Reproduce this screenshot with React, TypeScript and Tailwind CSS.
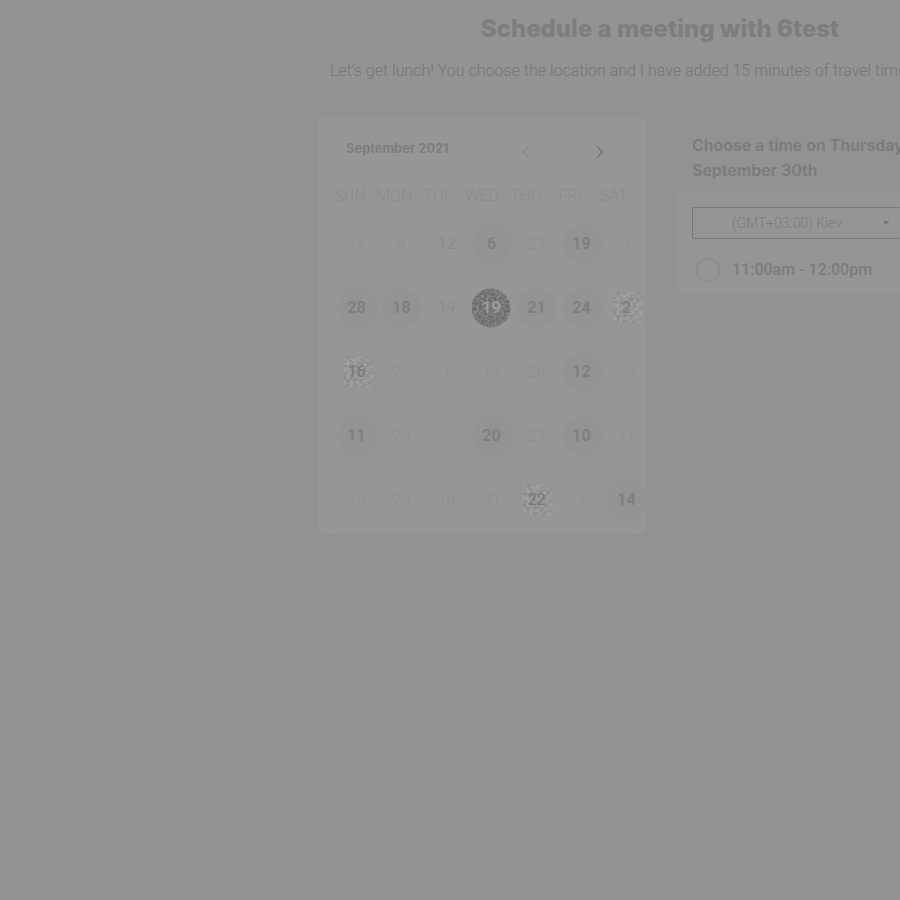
import { ChevronLeft, ChevronRight } from "lucide-react";

type Kind = "off" | "soft" | "open" | "grain" | "selected";
type Day = { label: string; kind: Kind };

const d = (label: string, kind: Kind = "off"): Day => ({ label, kind });

const weekdays = ["SUN", "MON", "TUE", "WED", "THU", "FRI", "SAT"];

const weeks: Day[][] = [
  [d("14"), d("4"), d("12", "soft"), d("6", "open"), d("29"), d("19", "open"), d("1")],
  [d("28", "open"), d("18", "open"), d("19", "soft"), d("19", "selected"), d("21", "open"), d("24", "open"), d("2", "grain")],
  [d("16", "grain"), d("22"), d("1"), d("14"), d("26"), d("12", "open"), d("25")],
  [d("11", "open"), d("23"), d("2"), d("20", "open"), d("29"), d("10", "open"), d("11")],
  [d("18"), d("23"), d("16"), d("31"), d("22", "grain"), d("7"), d("14", "open")],
];

const dayStyle: Record<Kind, string> = {
  off: "text-[#8f8f8f] font-light",
  soft: "text-[#888888] font-light",
  open: "bg-[#939393] text-[#7e7e7e] font-semibold",
  grain: "text-[#7c7c7c] font-medium",
  selected: "text-[#9c9c9c] font-semibold",
};

function Grain({ dark }: { dark: boolean }) {
  return (
    <svg className="absolute inset-0 size-10" viewBox="0 0 40 40" aria-hidden="true">
      <defs>
        <filter id="grainDark" x="0" y="0" width="1" height="1" colorInterpolationFilters="sRGB">
          <feTurbulence type="fractalNoise" baseFrequency="0.4" numOctaves="2" seed="4" />
          <feColorMatrix values="0.28 0 0 0 0.33  0.28 0 0 0 0.33  0.28 0 0 0 0.33  0 0 0 0 1" />
          <feComposite in2="SourceGraphic" operator="in" />
        </filter>
        <filter id="grainLight" x="0" y="0" width="1" height="1" colorInterpolationFilters="sRGB">
          <feTurbulence type="fractalNoise" baseFrequency="0.3" numOctaves="2" seed="9" />
          <feColorMatrix values="0.2 0 0 0 0.49  0.2 0 0 0 0.49  0.2 0 0 0 0.49  0 0 0 0 1" />
          <feComposite in2="SourceGraphic" operator="in" />
        </filter>
      </defs>
      {dark ? (
        <circle cx="19" cy="20" r="19.5" fill="#777" filter="url(#grainDark)" />
      ) : (
        <rect x="6" y="4" width="30" height="32" rx="6" fill="#999" filter="url(#grainLight)" />
      )}
    </svg>
  );
}

function DayButton({ day }: { day: Day }) {
  const grainy = day.kind === "grain" || day.kind === "selected";
  return (
    <button
      type="button"
      disabled={day.kind === "off"}
      aria-pressed={day.kind === "selected"}
      className={`relative flex size-10 items-center justify-center rounded-full text-base ${dayStyle[day.kind]}`}
    >
      {grainy && <Grain dark={day.kind === "selected"} />}
      <span className="relative">{day.label}</span>
    </button>
  );
}

function Calendar() {
  return (
    <section className="w-[328px] shrink-0 rounded-md bg-[#969696] pb-[2px] shadow-[0_0_8px_#919191]">
      <header className="flex h-[63px] items-center pr-9 pl-7">
        <h2 className="grow font-[Inter] text-[13px] font-semibold text-[#7c7c7c]">September 2021</h2>
        <div className="flex gap-[54px] pt-1.5">
          <button type="button" aria-label="Previous month" className="text-[#8c8c8c]">
            <ChevronLeft size={20} strokeWidth={2} />
          </button>
          <button type="button" aria-label="Next month" className="text-[#777777]">
            <ChevronRight size={20} strokeWidth={2} />
          </button>
        </div>
      </header>
      <table className="block">
        <thead className="block">
          <tr className="ml-[10px] grid w-[308px] grid-cols-7">
            {weekdays.map((w) => (
              <th key={w} scope="col" className="py-1 text-center text-base font-light text-[#8b8b8b]">
                {w}
              </th>
            ))}
          </tr>
        </thead>
        <tbody className="block">
          {weeks.map((week, i) => (
            <tr key={i} className="ml-4 grid h-16 w-[315px] grid-cols-7">
              {week.map((day, j) => (
                <td key={j} className="flex items-center justify-center">
                  <DayButton day={day} />
                </td>
              ))}
            </tr>
          ))}
        </tbody>
      </table>
    </section>
  );
}

function TimePanel() {
  return (
    <section className="w-[324px] shrink-0 rounded-sm bg-[#959595] shadow-[0_0_4px_#919191]">
      <header className="border-b border-[#969696] bg-[#929292] px-4 pt-4 pb-[9px]">
        <h2 className="font-[Inter] text-base leading-[25px] font-semibold text-[#7b7b7b]">
          Choose a time on Thursday,
          <br />
          September 30th
        </h2>
      </header>
      <div className="px-4 pt-[14px] pb-3">
        <div className="relative w-[209px]">
          <select
            aria-label="Time zone"
            className="h-8 w-full appearance-none rounded-xs border border-[#797979] pl-[39px] text-sm font-light text-[#7c7c7c]"
          >
            <option>(GMT+03:00) Kiev</option>
          </select>
          <svg className="pointer-events-none absolute top-3.5 right-[11px] h-1 w-2" viewBox="0 0 8 4" aria-hidden="true">
            <path d="M0.5 0h7L4 4z" fill="#777777" />
          </svg>
        </div>
        <label className="mt-[19px] ml-1 flex items-center gap-3 text-base font-medium text-[#7c7c7c]">
          <input type="radio" name="slot" className="size-6 appearance-none rounded-full border border-[#858585]" />
          11:00am - 12:00pm
        </label>
      </div>
    </section>
  );
}

export default function App() {
  return (
    <main className="min-h-screen overflow-hidden bg-[#939393] pl-[318px] font-[Roboto,sans-serif]">
      <div className="w-[684px] pt-[13px]">
        <h1 className="text-center font-[Inter] text-2xl leading-8 font-extrabold text-[#7d7d7d]">
          Schedule a meeting with 6test
        </h1>
        <p className="mt-[14px] pl-3 text-base font-light whitespace-nowrap text-[#757575]">
          Let’s get lunch! You choose the location and I have added 15 minutes of travel time
        </p>
        <div className="mt-[34px] flex items-start gap-[30px]">
          <Calendar />
          <TimePanel />
        </div>
      </div>
    </main>
  );
}
